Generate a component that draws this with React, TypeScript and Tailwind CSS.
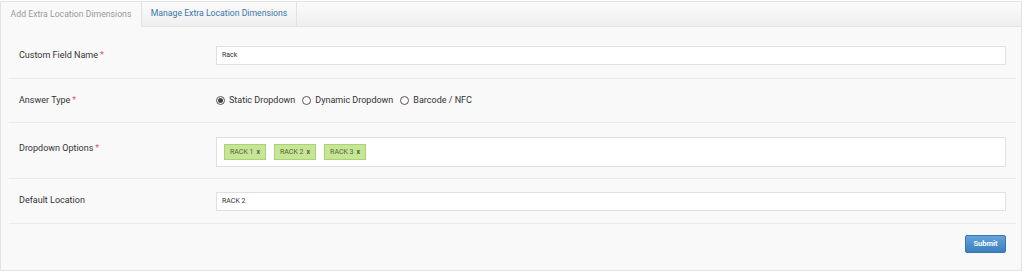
import React from "react";

function Radio({ checked, label }: { checked?: boolean; label: string }) {
  return (
    <label className="flex items-center gap-[4px] mr-[7px]">
      <span className="w-[9px] h-[9px] rounded-full border border-[#555] bg-white flex items-center justify-center">
        {checked && <span className="w-[5px] h-[5px] rounded-full bg-[#444]" />}
      </span>
      <span>{label}</span>
    </label>
  );
}

function Tag({ label }: { label: string }) {
  return (
    <span className="h-[16px] px-[5px] flex items-center gap-[3px] bg-[#c6e596] border border-[#aad470] text-[#4e6b2c] text-[7px] mr-[8px]">
      <span>{label}</span>
      <span className="font-bold">x</span>
    </span>
  );
}

function Label({ text, req }: { text: string; req?: boolean }) {
  return (
    <div className="w-[197px] shrink-0 text-[9px] text-[#333]">
      {text}
      {req && <span className="text-[#e05a5a] ml-[2px]">*</span>}
    </div>
  );
}

export default function App() {
  return (
    <div
      className="w-[1022px] h-[270px] mt-[1px] border border-[#e3e3e3] bg-[#f9f9f9] flex flex-col"
      style={{ fontFamily: "Roboto, 'Liberation Sans', sans-serif" }}
    >
      <div className="h-[25px] flex bg-gradient-to-b from-[#fbfbfb] to-[#efefef] border-b border-[#e2e2e2] text-[8.7px]">
        <div className="w-[141px] -mb-[1px] bg-[#f9f9f9] border-r border-[#e2e2e2] flex items-center justify-center text-[#9a9a9a]">
          Add Extra Location Dimensions
        </div>
        <div className="w-[155px] border-r border-[#e2e2e2] flex items-center justify-center text-[#3a77a8]">
          Manage Extra Location Dimensions
        </div>
      </div>
      <div className="pl-[8px] pr-[5px] flex flex-col">
        <div className="h-[52px] border-b border-[#ececec] px-[10px] pt-[19px] flex">
          <div className="h-[19px] flex items-center">
            <Label text="Custom Field Name" req />
          </div>
          <div className="flex-1 h-[19px] bg-white border border-[#e0e0e0] flex items-center px-[5px] text-[7px] text-[#333]">
            Rack
          </div>
        </div>
        <div className="h-[44px] border-b border-[#ececec] px-[10px] flex items-center">
          <Label text="Answer Type" req />
          <div className="flex items-center text-[9px] text-[#333]">
            <Radio checked label="Static Dropdown" />
            <Radio label="Dynamic Dropdown" />
            <Radio label="Barcode / NFC" />
          </div>
        </div>
        <div className="h-[56px] border-b border-[#ececec] px-[10px] pt-[14px] flex">
          <div className="pt-[5px]">
            <Label text="Dropdown Options" req />
          </div>
          <div className="flex-1 h-[30px] bg-white border border-[#e0e0e0] flex items-center px-[7px]">
            <Tag label="RACK 1" />
            <Tag label="RACK 2" />
            <Tag label="RACK 3" />
          </div>
        </div>
        <div className="h-[45px] border-b border-[#ececec] px-[10px] flex items-center">
          <Label text="Default Location" />
          <div className="flex-1 h-[19px] bg-white border border-[#e0e0e0] flex items-center px-[5px] text-[7px] text-[#333]">
            RACK 2
          </div>
        </div>
        <div className="px-[10px] pt-[11px] flex justify-end">
          <button className="w-[41px] h-[18px] rounded-[2px] border border-[#3a75ad] bg-gradient-to-b from-[#62a3da] to-[#3c7fbf] text-white text-[7.5px] font-bold">
            Submit
          </button>
        </div>
      </div>
    </div>
  );
}
